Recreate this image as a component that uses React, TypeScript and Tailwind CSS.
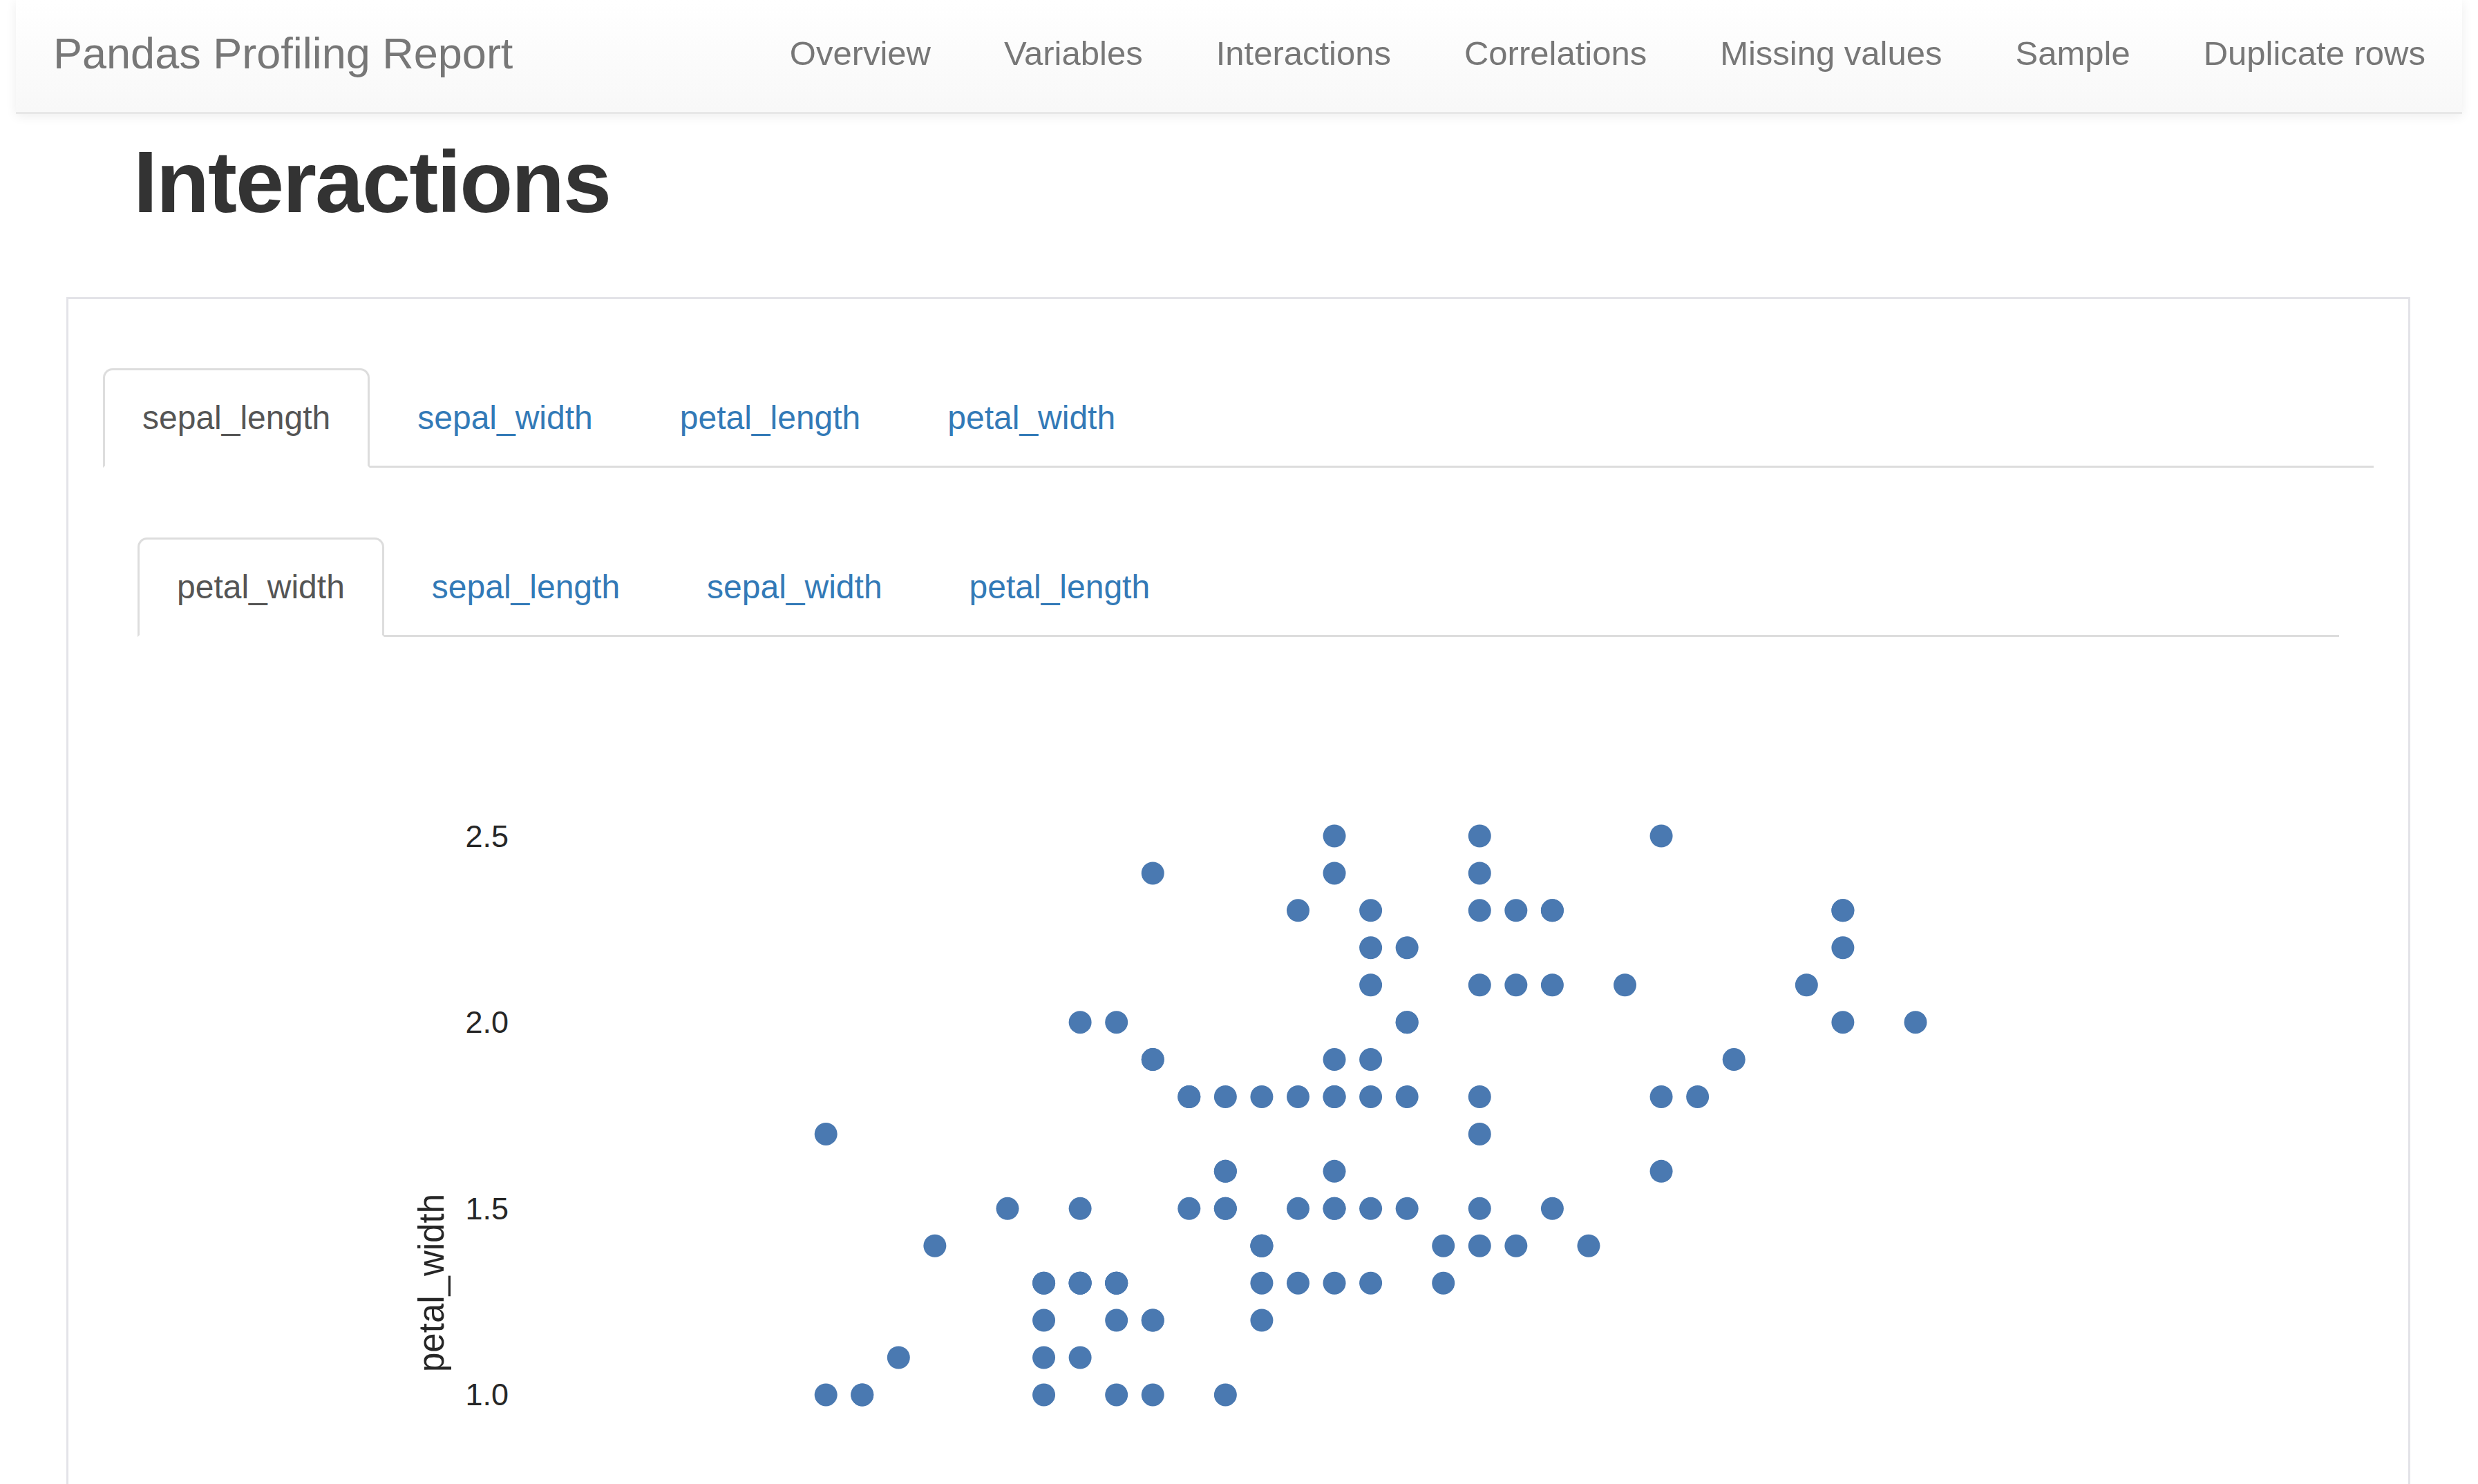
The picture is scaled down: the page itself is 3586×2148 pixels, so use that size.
const navLinks = [
  "Overview",
  "Variables",
  "Interactions",
  "Correlations",
  "Missing values",
  "Sample",
  "Duplicate rows",
];

const columns = ["sepal_length", "sepal_width", "petal_length", "petal_width"];

// iris: sepal_length, petal_width
const iris: [number, number][] = [
  [5.1, 0.2], [4.9, 0.2], [4.7, 0.2], [4.6, 0.2], [5.0, 0.2], [5.4, 0.4], [4.6, 0.3], [5.0, 0.2], [4.4, 0.2], [4.9, 0.1],
  [5.4, 0.2], [4.8, 0.2], [4.8, 0.1], [4.3, 0.1], [5.8, 0.2], [5.7, 0.4], [5.4, 0.4], [5.1, 0.3], [5.7, 0.3], [5.1, 0.3],
  [5.4, 0.2], [5.1, 0.4], [4.6, 0.2], [5.1, 0.5], [4.8, 0.2], [5.0, 0.2], [5.0, 0.4], [5.2, 0.2], [5.2, 0.2], [4.7, 0.2],
  [4.8, 0.2], [5.4, 0.4], [5.2, 0.1], [5.5, 0.2], [4.9, 0.2], [5.0, 0.2], [5.5, 0.2], [4.9, 0.1], [4.4, 0.2], [5.1, 0.2],
  [5.0, 0.3], [4.5, 0.3], [4.4, 0.2], [5.0, 0.6], [5.1, 0.4], [4.8, 0.3], [5.1, 0.2], [4.6, 0.2], [5.3, 0.2], [5.0, 0.2],
  [7.0, 1.4], [6.4, 1.5], [6.9, 1.5], [5.5, 1.3], [6.5, 1.5], [5.7, 1.3], [6.3, 1.6], [4.9, 1.0], [6.6, 1.3], [5.2, 1.4],
  [5.0, 1.0], [5.9, 1.5], [6.0, 1.0], [6.1, 1.4], [5.6, 1.3], [6.7, 1.4], [5.6, 1.5], [5.8, 1.0], [6.2, 1.5], [5.6, 1.1],
  [5.9, 1.8], [6.1, 1.3], [6.3, 1.5], [6.1, 1.2], [6.4, 1.3], [6.6, 1.4], [6.8, 1.4], [6.7, 1.7], [6.0, 1.5], [5.7, 1.0],
  [5.5, 1.1], [5.5, 1.0], [5.8, 1.2], [6.0, 1.6], [5.4, 1.5], [6.0, 1.6], [6.7, 1.5], [6.3, 1.3], [5.6, 1.3], [5.5, 1.3],
  [5.5, 1.2], [6.1, 1.4], [5.8, 1.2], [5.0, 1.0], [5.6, 1.3], [5.7, 1.2], [5.7, 1.3], [6.2, 1.3], [5.1, 1.1], [5.7, 1.3],
  [6.3, 2.5], [5.8, 1.9], [7.1, 2.1], [6.3, 1.8], [6.5, 2.2], [7.6, 2.1], [4.9, 1.7], [7.3, 1.8], [6.7, 1.8], [7.2, 2.5],
  [6.5, 2.0], [6.4, 1.9], [6.8, 2.1], [5.7, 2.0], [5.8, 2.4], [6.4, 2.3], [6.5, 1.8], [7.7, 2.2], [7.7, 2.3], [6.0, 1.5],
  [6.9, 2.3], [5.6, 2.0], [7.7, 2.0], [6.3, 1.8], [6.7, 2.1], [7.2, 1.8], [6.2, 1.8], [6.1, 1.8], [6.4, 2.1], [7.2, 1.6],
  [7.4, 1.9], [7.9, 2.0], [6.4, 2.2], [6.3, 1.5], [6.1, 1.4], [7.7, 2.3], [6.3, 2.4], [6.4, 1.8], [6.0, 1.8], [6.9, 2.1],
  [6.7, 2.4], [6.9, 2.3], [5.8, 1.9], [6.8, 2.3], [6.7, 2.5], [6.7, 2.3], [6.3, 1.9], [6.5, 2.0], [6.2, 2.3], [5.9, 1.8],
];

const px = (sl: number) => 2573 - (7.9 - sl) * 525.6;
const py = (pw: number) => 288 + (2.5 - pw) * 539.3;

const yTicks = [0, 0.5, 1, 1.5, 2, 2.5];
const xTicks = [4.5, 5, 5.5, 6, 6.5, 7, 7.5, 8];

const Tabs = ({ items, active }: { items: string[]; active: number }) => (
  <ul className="flex border-b-[3px] border-[#ddd]">
    {items.map((item, i) => (
      <li key={item} className="-mb-[3px] mr-[12px]">
        <a
          className={
            i === active
              ? "block rounded-t-[14px] border-[3px] border-[#ddd] border-b-transparent bg-white px-[54px] py-[34px] text-[48px] leading-[70px] text-[#555]"
              : "block rounded-t-[14px] border-[3px] border-transparent px-[54px] py-[34px] text-[48px] leading-[70px] text-[#337ab7]"
          }
        >
          {item}
        </a>
      </li>
    ))}
  </ul>
);

const ScatterPlot = () => (
  <svg width="3188" height="1850" viewBox="0 0 3188 1850" className="block">
    {yTicks.map((t) => (
      <text
        key={t}
        x={537}
        y={py(t)}
        textAnchor="end"
        dominantBaseline="central"
        fontSize="45"
        fill="#262626"
        fontFamily="Liberation Sans, Arial, sans-serif"
      >
        {t.toFixed(1)}
      </text>
    ))}
    {xTicks.map((t) => (
      <text
        key={t}
        x={px(t)}
        y={1700}
        textAnchor="middle"
        dominantBaseline="central"
        fontSize="45"
        fill="#262626"
        fontFamily="Liberation Sans, Arial, sans-serif"
      >
        {t.toFixed(1)}
      </text>
    ))}
    <text
      x={425}
      y={935}
      transform="rotate(-90 425 935)"
      textAnchor="middle"
      dominantBaseline="central"
      fontSize="51"
      fill="#262626"
      fontFamily="Liberation Sans, Arial, sans-serif"
    >
      petal_width
    </text>
    <text
      x={1627}
      y={1790}
      textAnchor="middle"
      dominantBaseline="central"
      fontSize="51"
      fill="#262626"
      fontFamily="Liberation Sans, Arial, sans-serif"
    >
      sepal_length
    </text>
    {iris.map(([sl, pw], i) => (
      <circle key={i} cx={px(sl)} cy={py(pw)} r={16.5} fill="#4a79b1" />
    ))}
  </svg>
);

export default function App() {
  return (
    <div className="min-h-screen bg-white font-['Liberation_Sans',Arial,sans-serif]">
      {/* Navbar */}
      <nav className="mx-[23px] flex h-[165px] items-center justify-between border-b-[3px] border-[#e7e7e7] bg-linear-to-b from-white to-[#f8f8f8] pb-[8px] shadow-[0_3px_15px_rgba(0,0,0,0.075)]">
        <a className="pl-[54px] text-[63px] leading-none text-[#777]">Pandas Profiling Report</a>
        <ul className="flex">
          {navLinks.map((link) => (
            <li key={link}>
              <a className="block px-[53px] text-[49px] leading-none text-[#777]">{link}</a>
            </li>
          ))}
        </ul>
      </nav>

      <main className="pl-[96px] pr-[98px]">
        <h1 className="ml-[97px] mt-[30px] text-[126px] font-bold leading-[1.1] tracking-[-2px] text-[#333]">
          Interactions
        </h1>

        {/* Interactions panel */}
        <section className="mt-[96px] border-x-[3px] border-t-[3px] border-[#e3e3e8] px-[50px] pt-[100px]">
          <Tabs items={columns} active={0} />
          <div className="px-[50px] pt-[101px]">
            <Tabs items={["petal_width", "sepal_length", "sepal_width", "petal_length"]} active={0} />
            <ScatterPlot />
          </div>
        </section>
      </main>
    </div>
  );
}
